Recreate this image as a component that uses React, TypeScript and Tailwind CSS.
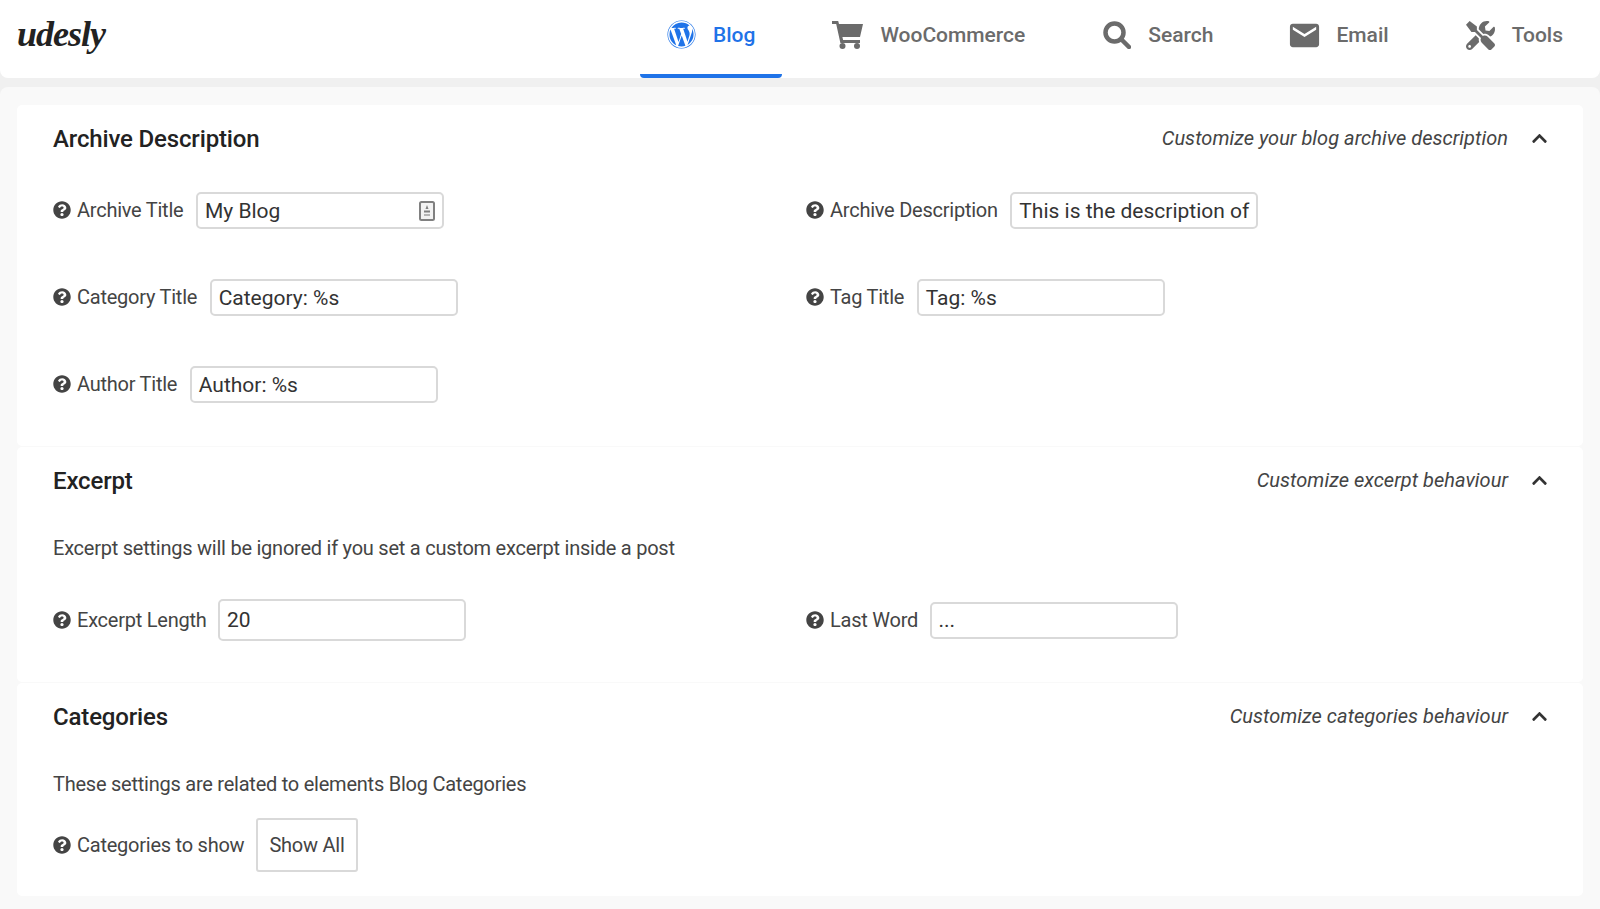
import { FaChevronUp, FaQuestionCircle, FaTools, FaWordpress } from "react-icons/fa";
import { MdEmail } from "react-icons/md";
import type { ReactNode } from "react";

function CartIcon() {
  return (
    <svg width="31" height="28" viewBox="0 0 31 28" fill="currentColor" className="shrink-0">
      <path d="M0 0h6.2l.8 3h24l-3 13H10.4l.7 3H28v3H8.4L4.2 3H0z" />
      <circle cx="10.5" cy="25" r="3" />
      <circle cx="25" cy="25" r="3" />
    </svg>
  );
}

function SearchIcon() {
  return (
    <svg width="28" height="28" viewBox="0 0 28 28" fill="none" stroke="currentColor">
      <circle cx="11.5" cy="11.5" r="9" strokeWidth="4.5" />
      <path d="M18.5 18.5L26 26" strokeWidth="4.5" strokeLinecap="round" />
    </svg>
  );
}

function NavTab({ icon, label, active }: { icon: ReactNode; label: string; active?: boolean }) {
  return (
    <div
      className={`flex h-[78px] items-center gap-[17px] border-b-4 px-[27px] pb-[2px] text-[21px] font-medium ${
        active ? "rounded-b-sm border-[#1f73e8] text-[#1f73e8]" : "border-transparent text-[#6b6b6b]"
      }`}
    >
      <span className="flex min-w-[29px] items-center justify-center pb-[2px] text-[29px]">{icon}</span>
      <span>{label}</span>
    </div>
  );
}

function Field({ label, value, addon, tall, tight }: { label: string; value: string; addon?: boolean; tall?: boolean; tight?: boolean }) {
  return (
    <div className="flex items-center">
      <FaQuestionCircle className={`mr-[6px] text-[18px] text-[#444444] ${tight ? "" : "-translate-y-px"}`} />
      <span className={`text-xl tracking-[-0.24px] text-[#444444] ${tight ? "mr-[11.5px]" : "mr-[12.5px] pb-[2px]"}`}>{label}</span>
      <div
        className={`flex w-[248px] items-center justify-between overflow-hidden rounded-[5px] border-2 border-[#d9d9d9] px-[7px] text-[21px] whitespace-nowrap text-[#333333] ${
          tall ? "h-[42px]" : "h-[37px]"
        }`}
      >
        <span className="pt-[2px]">{value}</span>
        {addon && (
          <svg width="16" height="20" viewBox="0 0 16 20" className="shrink-0">
            <rect x="1" y="1" width="14" height="18" rx="1.5" fill="#f2f2f2" stroke="#808080" strokeWidth="2" />
            <path d="M8 4l1.5 4h-3z" fill="#808080" />
            <path d="M5 9.5h6v2H5z" fill="#808080" />
            <path d="M5 13h6v2H5z" fill="#b5b5b5" />
          </svg>
        )}
      </div>
    </div>
  );
}

function Section({ title, hint, children }: { title: string; hint: string; children: ReactNode }) {
  return (
    <section className="rounded-[5px] bg-white px-9 pt-[19px]">
      <div className="flex h-[30px] items-center justify-between">
        <h2 className="text-2xl font-medium tracking-[-0.15px] text-[#222222]">{title}</h2>
        <div className="-mr-[2px] flex -translate-y-[1px] items-center gap-[23px] pr-[1px]">
          <span className="text-xl tracking-[0.03px] italic text-[#444444]">{hint}</span>
          <FaChevronUp className="text-[17px] text-[#333333]" />
        </div>
      </div>
      {children}
    </section>
  );
}

export default function App() {
  return (
    <div className="min-h-[909px] bg-[#f0f0f0] font-['Roboto',sans-serif]">
      <header className="flex h-[78px] items-start justify-between rounded-b-lg bg-white pr-[10px]">
        <div className="pl-[17px] pt-[12px] font-['Liberation_Serif',serif] text-[36px] leading-[44px] font-bold italic tracking-[-1px] text-[#222222]">
          udesly
        </div>
        <nav className="flex gap-[23px]">
          <NavTab icon={<FaWordpress className="-translate-y-px" />} label="Blog" active />
          <NavTab icon={<CartIcon />} label="WooCommerce" />
          <NavTab icon={<SearchIcon />} label="Search" />
          <NavTab icon={<MdEmail className="-mx-[3px] shrink-0 text-[35px]" />} label="Email" />
          <NavTab icon={<FaTools />} label="Tools" />
        </nav>
      </header>

      <main className="mt-[9px] flex min-h-[822px] flex-col gap-px rounded-t-lg bg-[#f9f9f9] px-[17px] pt-[18px] pb-3">
        <Section title="Archive Description" hint="Customize your blog archive description">
          <div className="mt-[38px] grid grid-cols-[753px_1fr] gap-y-[50px] pb-[43px]">
            <Field label="Archive Title" value="My Blog" addon />
            <Field label="Archive Description" value="This is the description of" />
            <Field label="Category Title" value="Category: %s" />
            <Field label="Tag Title" value="Tag: %s" />
            <Field label="Author Title" value="Author: %s" />
          </div>
        </Section>

        <Section title="Excerpt" hint="Customize excerpt behaviour">
          <p className="mt-[38px] text-xl tracking-[-0.24px] text-[#444444]">Excerpt settings will be ignored if you set a custom excerpt inside a post</p>
          <div className="mt-[37px] grid grid-cols-[753px_1fr] items-center pb-[41px]">
            <Field label="Excerpt Length" value="20" tall tight />
            <Field label="Last Word" value="..." tight />
          </div>
        </Section>

        <Section title="Categories" hint="Customize categories behaviour">
          <p className="mt-[38px] text-xl tracking-[-0.24px] text-[#444444]">These settings are related to elements Blog Categories</p>
          <div className="mt-[20px] flex items-center pb-[24px]">
            <FaQuestionCircle className="mr-[6px] text-[18px] text-[#444444]" />
            <span className="mr-3 text-xl tracking-[-0.24px] text-[#444444]">Categories to show</span>
            <div className="flex h-[54px] items-center rounded-[3px] border-2 border-[#d9d9d9] px-[11px] text-xl tracking-[-0.24px] text-[#444444]">Show All</div>
          </div>
        </Section>
      </main>
    </div>
  );
}
